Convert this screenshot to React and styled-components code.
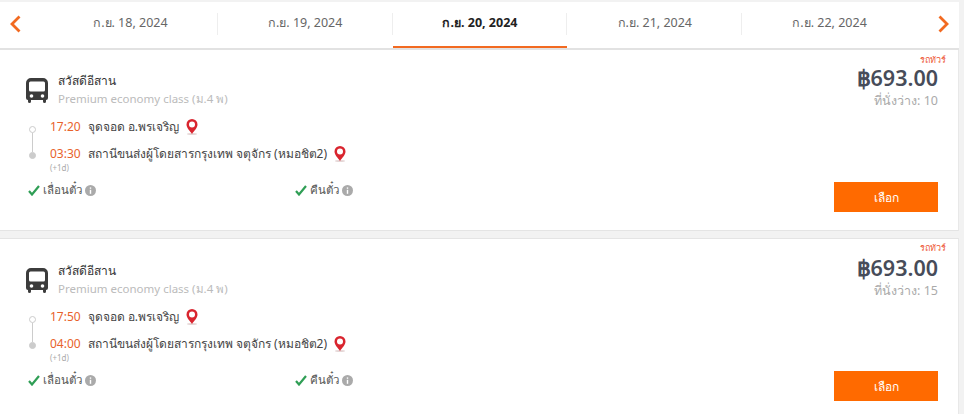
import React from "react"
import styled, { createGlobalStyle } from "styled-components"

const GlobalStyle = createGlobalStyle`
    html, body {
        margin: 0;
        padding: 0;
        height: 414px;
        overflow: hidden;
        background: #f2f2f2;
        font-family: "Noto Sans", "Open Sans", "Liberation Sans", sans-serif;
    }
`

const Page = styled.div`
    width: 964px;
    height: 414px;
    overflow: hidden;
    padding-top: 2px;
    box-sizing: border-box;
`

const DateBar = styled.div`
    display: flex;
    align-items: center;
    width: 959px;
    height: 46px;
    background: #fff;
    border-bottom: 2px solid #e2e2e2;
    box-sizing: content-box;
`

const Arrow = styled.button`
    display: flex;
    align-items: center;
    flex: none;
    box-sizing: border-box;
    width: ${({ $wide }) => $wide}px;
    height: 46px;
    padding: 0 0 3px ${({ $pad }) => $pad}px;
    border: none;
    background: none;
`

const Tabs = styled.div`
    display: flex;
    flex: none;
    width: 874px;
`

const Tab = styled.div`
    flex: 1;
    height: 46px;
    display: flex;
    align-items: center;
    justify-content: center;
    box-sizing: border-box;
    padding-bottom: 5px;
    font-size: 12.5px;
    font-weight: ${({ $active }) => ($active ? 700 : 400)};
    color: ${({ $active }) => ($active ? "#222" : "#666")};
    box-shadow: ${({ $active }) => ($active ? "inset 0 -2px 0 #f26a21" : "none")};
    position: relative;

    &:not(:last-child)::after {
        content: "";
        position: absolute;
        right: 0;
        top: 11px;
        height: 22px;
        width: 1px;
        background: #eee;
    }
`

const Card = styled.div`
    display: flex;
    justify-content: space-between;
    box-sizing: border-box;
    width: 959px;
    height: ${({ $height }) => $height}px;
    margin-bottom: 7px;
    background: #fff;
    border-right: 1px solid #e8e8e8;
    border-bottom: 1px solid #e4e4e4;
    padding: 5px 20px 0 26px;

    &:last-child {
        margin-bottom: 0;
        border-bottom: none;
        border-top: 1px solid #e4e4e4;
        padding-top: 4px;
    }
`

const Info = styled.div`
    display: flex;
    flex-direction: column;
`

const Operator = styled.div`
    display: flex;
    align-items: center;
    gap: 10px;
    margin-top: ${({ $top }) => $top}px;
`

const OperatorName = styled.div`
    font-size: 12px;
    line-height: 18px;
    font-weight: 500;
    color: #333;
`

const ClassName = styled.div`
    font-size: 11.5px;
    line-height: 18px;
    color: #bbb;
`

const Route = styled.div`
    display: flex;
    margin-top: 5px;
    margin-left: 3px;
    gap: 14px;
`

const Rail = styled.div`
    display: flex;
    flex-direction: column;
    align-items: center;
    width: 7px;
    padding-top: 13px;
`

const RailLine = styled.div`
    width: 1px;
    height: 19px;
    background: #ccc;
`

const RailDot = styled.div`
    width: 7px;
    height: 7px;
    border-radius: 50%;
    box-sizing: border-box;
    border: 1px solid #ccc;
    background: ${({ $filled }) => ($filled ? "#ccc" : "#fff")};
`

const Stops = styled.div`
    display: flex;
    flex-direction: column;
`

const Stop = styled.div`
    display: flex;
    align-items: center;
    gap: 7px;
    height: 27px;
    font-size: 12px;
    color: #444;
`

const Time = styled.span`
    color: #e8622c;
    font-size: 12px;
`

const NextDay = styled.div`
    margin-top: -3px;
    font-size: 8px;
    line-height: 8px;
    color: #aaa;
`

const Policies = styled.div`
    display: flex;
    margin-top: 9px;
    margin-left: 2px;
`

const Policy = styled.div`
    display: flex;
    align-items: center;
    gap: 3px;
    width: 267px;
    font-size: 11.5px;
    line-height: 18px;
    color: #555;
`

const Side = styled.div`
    display: flex;
    flex-direction: column;
    align-items: flex-end;
`

const BusType = styled.div`
    margin-right: -8px;
    font-size: 9px;
    line-height: 10px;
    color: #ee5a3a;
`

const Price = styled.div`
    margin-top: ${({ $top }) => $top}px;
    font-size: 21.5px;
    line-height: 24px;
    font-weight: 600;
    color: #474c59;
`

const Seats = styled.div`
    margin-top: 3px;
    font-size: 12.5px;
    line-height: 16px;
    color: #aaa;
`

const SelectButton = styled.button`
    margin-top: ${({ $top }) => $top}px;
    width: 104px;
    height: 30px;
    border: none;
    background: #ff6a00;
    color: #fff;
    font-family: inherit;
    font-size: 12px;
    font-weight: 500;
`

const BusIcon = () => (
    <svg width="22" height="25" viewBox="0 0 22 25">
        <path fill="#3c3c3c" d="M5 0h12a5 5 0 0 1 5 5v15a2 2 0 0 1-2 2v1.500a1.500 1.500 0 0 1-3 0V22H5v1.500a1.500 1.500 0 0 1-3 0V22a2 2 0 0 1-2-2V5a5 5 0 0 1 5-5z" />
        <rect x="3" y="3.500" width="16" height="10" rx="1.500" fill="#fff" />
        <circle cx="5.500" cy="18" r="1.800" fill="#fff" />
        <circle cx="16.500" cy="18" r="1.800" fill="#fff" />
    </svg>
)

const PinIcon = () => (
    <svg width="12" height="16" viewBox="0 0 12 16">
        <ellipse cx="6" cy="15" rx="5" ry="1" fill="#e5d5d5" />
        <path fill="#d9252f" d="M6 0a5.500 5.500 0 0 1 5.500 5.500C11.500 9 8 12 6 15 4 12 .5 9 .5 5.500A5.500 5.500 0 0 1 6 0z" />
        <circle cx="6" cy="5.500" r="3" fill="#fff" />
    </svg>
)

const CheckIcon = () => (
    <svg width="12" height="11" viewBox="0 0 12 11">
        <path fill="none" stroke="#2f9e55" strokeWidth="2.200" d="M1 6l3 3.500L11 1" />
    </svg>
)

const InfoIcon = () => (
    <svg width="11" height="11" viewBox="0 0 11 11">
        <circle cx="5.500" cy="5.500" r="5.500" fill="#aaa" />
        <rect x="4.800" y="4.800" width="1.400" height="4" fill="#fff" />
        <rect x="4.800" y="2.400" width="1.400" height="1.400" fill="#fff" />
    </svg>
)

const Chevron = ({ d }) => (
    <svg width="11" height="18" viewBox="0 0 11 18">
        <path fill="none" stroke="#f26a21" strokeWidth="2.800" d={d} />
    </svg>
)

const dates = ["ก.ย. 18, 2024", "ก.ย. 19, 2024", "ก.ย. 20, 2024", "ก.ย. 21, 2024", "ก.ย. 22, 2024"]

const trips = [
    { depart: "17:20", arrive: "03:30", seats: 10, height: 181, infoTop: 17, priceTop: 1, buttonTop: 73 },
    { depart: "17:50", arrive: "04:00", seats: 15, height: 176, infoTop: 19, priceTop: 3, buttonTop: 72 },
]

const Trip = ({ trip }) => (
    <Card $height={trip.height}>
        <Info>
            <Operator $top={trip.infoTop}>
                <BusIcon />
                <div>
                    <OperatorName>สวัสดีอีสาน</OperatorName>
                    <ClassName>Premium economy class (ม.4 พ)</ClassName>
                </div>
            </Operator>
            <Route>
                <Rail>
                    <RailDot />
                    <RailLine />
                    <RailDot $filled />
                </Rail>
                <Stops>
                    <Stop>
                        <Time>{trip.depart}</Time>
                        จุดจอด อ.พรเจริญ
                        <PinIcon />
                    </Stop>
                    <Stop>
                        <Time>{trip.arrive}</Time>
                        สถานีขนส่งผู้โดยสารกรุงเทพ จตุจักร (หมอชิต2)
                        <PinIcon />
                    </Stop>
                    <NextDay>(+1d)</NextDay>
                </Stops>
            </Route>
            <Policies>
                <Policy>
                    <CheckIcon />
                    เลื่อนตั๋ว
                    <InfoIcon />
                </Policy>
                <Policy>
                    <CheckIcon />
                    คืนตั๋ว
                    <InfoIcon />
                </Policy>
            </Policies>
        </Info>
        <Side>
            <BusType>รถทัวร์</BusType>
            <Price $top={trip.priceTop}>฿693.00</Price>
            <Seats>ที่นั่งว่าง: {trip.seats}</Seats>
            <SelectButton $top={trip.buttonTop}>เลือก</SelectButton>
        </Side>
    </Card>
)

const App = () => (
    <Page>
        <GlobalStyle />
        <DateBar>
            <Arrow $wide={43} $pad={10}>
                <Chevron d="M9.500 1.500L2 9l7.500 7.500" />
            </Arrow>
            <Tabs>
                {dates.map((date, i) => (
                    <Tab key={date} $active={i === 2}>{date}</Tab>
                ))}
            </Tabs>
            <Arrow $wide={42} $pad={21}>
                <Chevron d="M1.500 1.500L9 9l-7.500 7.500" />
            </Arrow>
        </DateBar>
        {trips.map((trip) => (
            <Trip key={trip.depart} trip={trip} />
        ))}
    </Page>
)

export default App
